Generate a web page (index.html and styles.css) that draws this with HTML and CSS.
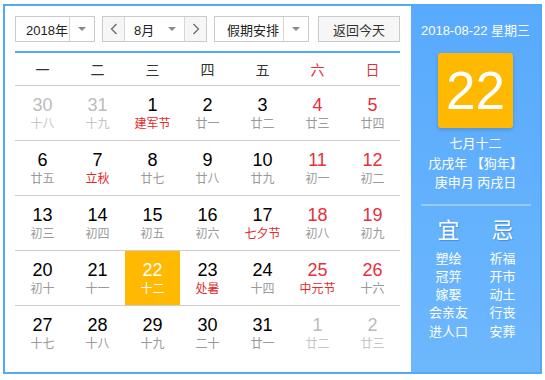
FILE: index.html
```html
<!DOCTYPE html>
<html lang="zh-CN">
<head>
  <meta charset="UTF-8">
  <title>万年历</title>
  <link rel="stylesheet" href="styles.css">
</head>
<body>
  <div class="calendar">
    <!-- Left: month grid -->
    <div class="main">
      <div class="toolbar">
        <div class="select year">
          <span class="value">2018年</span>
          <span class="caret-box"><i class="caret"></i></span>
        </div>
        <div class="month-group">
          <span class="nav">
            <svg width="8" height="12" viewBox="0 0 8 12"><polyline points="6.5,1 1.5,6 6.5,11" fill="none" stroke="#666" stroke-width="1.2"/></svg>
          </span>
          <div class="month">
            <span class="value">8月</span>
            <i class="caret"></i>
          </div>
          <span class="nav next">
            <svg width="8" height="12" viewBox="0 0 8 12"><polyline points="1.5,1 6.5,6 1.5,11" fill="none" stroke="#666" stroke-width="1.2"/></svg>
          </span>
        </div>
        <div class="select holiday">
          <span class="value">假期安排</span>
          <span class="caret-box"><i class="caret"></i></span>
        </div>
        <span class="today-btn">返回今天</span>
      </div>

      <div class="week">
        <span>一</span><span>二</span><span>三</span><span>四</span><span>五</span>
        <span class="red">六</span><span class="red">日</span>
      </div>

      <div class="days">
        <div class="day other"><b>30</b><small>十八</small></div>
        <div class="day other"><b>31</b><small>十九</small></div>
        <div class="day fest"><b>1</b><small>建军节</small></div>
        <div class="day"><b>2</b><small>廿一</small></div>
        <div class="day"><b>3</b><small>廿二</small></div>
        <div class="day weekend"><b>4</b><small>廿三</small></div>
        <div class="day weekend"><b>5</b><small>廿四</small></div>

        <div class="day"><b>6</b><small>廿五</small></div>
        <div class="day fest"><b>7</b><small>立秋</small></div>
        <div class="day"><b>8</b><small>廿七</small></div>
        <div class="day"><b>9</b><small>廿八</small></div>
        <div class="day"><b>10</b><small>廿九</small></div>
        <div class="day weekend"><b>11</b><small>初一</small></div>
        <div class="day weekend"><b>12</b><small>初二</small></div>

        <div class="day"><b>13</b><small>初三</small></div>
        <div class="day"><b>14</b><small>初四</small></div>
        <div class="day"><b>15</b><small>初五</small></div>
        <div class="day"><b>16</b><small>初六</small></div>
        <div class="day fest"><b>17</b><small>七夕节</small></div>
        <div class="day weekend"><b>18</b><small>初八</small></div>
        <div class="day weekend"><b>19</b><small>初九</small></div>

        <div class="day"><b>20</b><small>初十</small></div>
        <div class="day"><b>21</b><small>十一</small></div>
        <div class="day today"><b>22</b><small>十二</small></div>
        <div class="day fest"><b>23</b><small>处暑</small></div>
        <div class="day"><b>24</b><small>十四</small></div>
        <div class="day weekend fest"><b>25</b><small>中元节</small></div>
        <div class="day weekend"><b>26</b><small>十六</small></div>

        <div class="day last"><b>27</b><small>十七</small></div>
        <div class="day last"><b>28</b><small>十八</small></div>
        <div class="day last"><b>29</b><small>十九</small></div>
        <div class="day last"><b>30</b><small>二十</small></div>
        <div class="day last"><b>31</b><small>廿一</small></div>
        <div class="day last other"><b>1</b><small>廿二</small></div>
        <div class="day last other"><b>2</b><small>廿三</small></div>
      </div>
    </div>

    <!-- Right: selected day detail -->
    <div class="side">
      <div class="side-date">2018-08-22 星期三</div>
      <div class="big-day">22</div>
      <div class="lunar">
        <p>七月十二</p>
        <p>戊戌年 【狗年】</p>
        <p>庚申月 丙戌日</p>
      </div>
      <div class="divider"></div>
      <div class="almanac">
        <div class="col">
          <h3>宜</h3>
          <p>塑绘</p>
          <p>冠笄</p>
          <p>嫁娶</p>
          <p>会亲友</p>
          <p>进人口</p>
        </div>
        <div class="col">
          <h3>忌</h3>
          <p>祈福</p>
          <p>开市</p>
          <p>动土</p>
          <p>行丧</p>
          <p>安葬</p>
        </div>
      </div>
    </div>
  </div>
</body>
</html>
```

FILE: styles.css
```css
* {
  margin: 0;
  padding: 0;
  box-sizing: border-box;
}
body {
  font-family: 'Liberation Sans', 'Noto Sans CJK SC', sans-serif;
  background: #fff;
  color: #333;
}
.calendar {
  display: flex;
  width: 539px;
  height: 370px;
  margin: 4px 0 0 3px;
  border: 2px solid #52a8f9;
}

/* main area */
.main {
  width: 406px;
  padding: 10px 11px 0 10px;
}
.toolbar {
  display: flex;
  height: 26px;
  font-size: 13px;
  white-space: nowrap;
}
.select,
.month-group,
.today-btn {
  display: flex;
  align-items: center;
  height: 26px;
  border: 1px solid #cacaca;
  background: #fff;
}
.select .value {
  flex: 1;
  padding-left: 10px;
  color: #222;
}
.caret-box {
  display: flex;
  align-items: center;
  justify-content: center;
  width: 25px;
  height: 100%;
  border-left: 1px solid #d6d6d6;
}
.caret {
  width: 0;
  height: 0;
  border-left: 4px solid transparent;
  border-right: 4px solid transparent;
  border-top: 4px solid #8a8a8a;
}
.year {
  width: 80px;
}
.month-group {
  width: 105px;
  margin-left: 7px;
}
.nav {
  display: flex;
  align-items: center;
  justify-content: center;
  width: 22px;
  height: 100%;
  background: #f6f6f6;
  border-right: 1px solid #d6d6d6;
}
.nav.next {
  border-right: none;
  border-left: 1px solid #d6d6d6;
}
.month {
  flex: 1;
  display: flex;
  align-items: center;
  justify-content: space-between;
  padding: 0 8px 0 9px;
  color: #222;
}
.holiday {
  width: 95px;
  margin-left: 7px;
}
.holiday .value {
  padding-left: 12px;
}
.today-btn {
  justify-content: center;
  width: 82px;
  margin-left: 9px;
  background: #f6f6f6;
  color: #333;
}

/* week header */
.week {
  display: grid;
  grid-template-columns: repeat(7, 55px);
  height: 35px;
  margin-top: 9px;
  border-top: 2px solid #52a8f9;
  border-bottom: 1px solid #cfcfcf;
  align-items: center;
  text-align: center;
  font-size: 14px;
  color: #333;
}
.week .red {
  color: #e8303a;
}

/* day cells */
.days {
  display: grid;
  grid-template-columns: repeat(7, 55px);
}
.day {
  display: flex;
  flex-direction: column;
  align-items: center;
  height: 55px;
  padding-top: 9px;
  border-bottom: 1px solid #cfcfcf;
}
.day.last {
  border-bottom: none;
}
.day b {
  font-weight: normal;
  font-size: 18px;
  line-height: 21px;
  color: #000;
}
.day small {
  font-size: 12px;
  line-height: 17px;
  color: #999;
}
.day.weekend b {
  color: #e8303a;
}
.day.fest small {
  color: #e42a2a;
}
.day.other b {
  color: #bbb;
}
.day.other small {
  color: #c6c6c6;
}
.day.today {
  background: #ffb900;
}
.day.today b,
.day.today small {
  color: #fff;
}

/* right panel */
.side {
  flex: 1;
  display: flex;
  flex-direction: column;
  align-items: center;
  background: linear-gradient(#58aafd, #6db7fd);
  color: #fff;
  padding-top: 16px;
}
.side-date {
  font-size: 13px;
  line-height: 18px;
}
.big-day {
  width: 75px;
  height: 75px;
  margin-top: 13px;
  background: #ffb900;
  border-radius: 3px;
  box-shadow: 0 2px 4px rgba(0, 0, 0, 0.15);
  text-align: center;
  font-size: 53px;
  line-height: 75px;
}
.lunar {
  margin-top: 6px;
  text-align: center;
  font-size: 13px;
  line-height: 19.5px;
}
.divider {
  width: 110px;
  height: 2px;
  margin-top: 11px;
  background: rgba(255, 255, 255, 0.35);
}
.almanac {
  display: flex;
  margin-top: 10px;
}
.almanac .col {
  width: 54px;
  text-align: center;
}
.almanac h3 {
  font-weight: normal;
  font-size: 22px;
  line-height: 30px;
  margin-bottom: 4px;
  text-shadow: 1px 1px 1px rgba(40, 110, 190, 0.5);
}
.almanac p {
  font-size: 13px;
  line-height: 18.3px;
}
```
